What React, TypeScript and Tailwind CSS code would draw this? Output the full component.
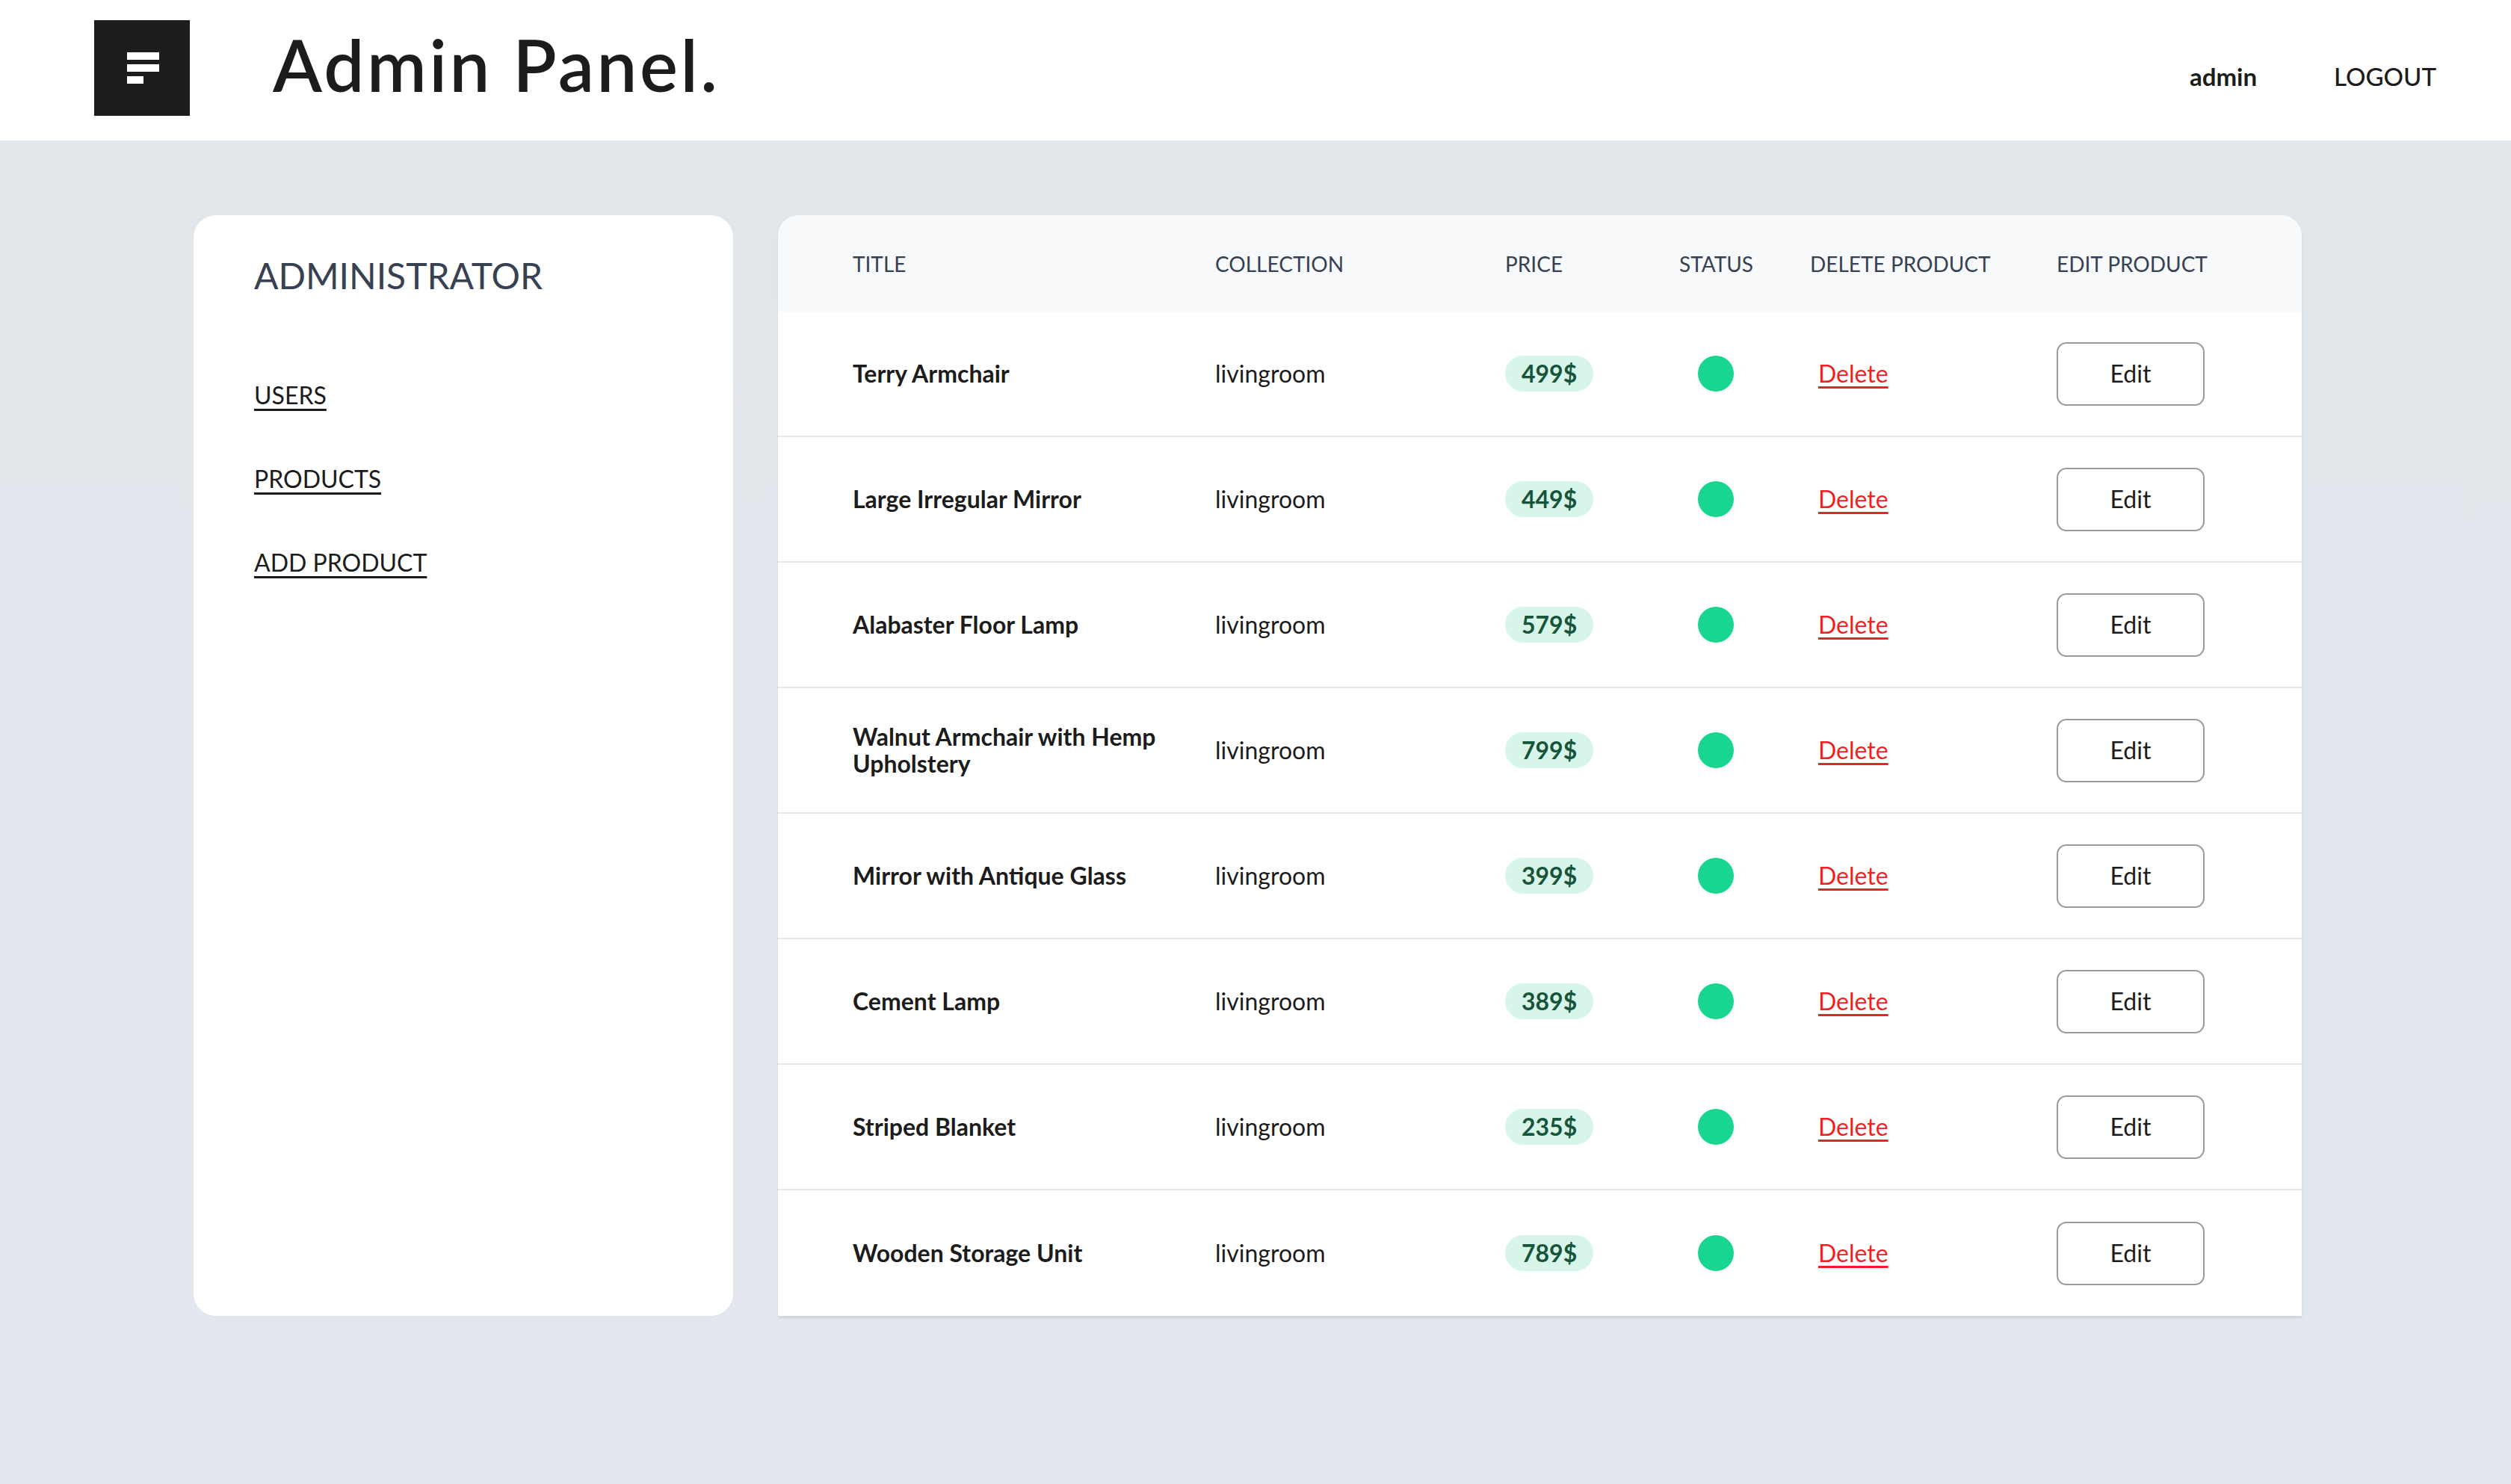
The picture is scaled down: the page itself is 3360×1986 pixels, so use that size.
import React from "react";

type Product = {
  id: number;
  title: string;
  collection: string;
  price: number;
};

const PRODUCTS: Product[] = [
  { id: 1, title: "Terry Armchair", collection: "livingroom", price: 499 },
  { id: 2, title: "Large Irregular Mirror", collection: "livingroom", price: 449 },
  { id: 3, title: "Alabaster Floor Lamp", collection: "livingroom", price: 579 },
  { id: 4, title: "Walnut Armchair with Hemp Upholstery", collection: "livingroom", price: 799 },
  { id: 5, title: "Mirror with Antique Glass", collection: "livingroom", price: 399 },
  { id: 6, title: "Cement Lamp", collection: "livingroom", price: 389 },
  { id: 7, title: "Striped Blanket", collection: "livingroom", price: 235 },
  { id: 8, title: "Wooden Storage Unit", collection: "livingroom", price: 789 },
];

const COLS = "grid grid-cols-[485px_388px_233px_175px_330px_1fr] pl-[100px]";

function Logo() {
  return (
    <div className="w-[128px] h-[128px] bg-[#1c1c1c] mt-[27px] shrink-0">
      <svg width="128" height="128" viewBox="0 0 128 128">
        <rect x="44" y="43" width="43" height="10" fill="#fff" />
        <rect x="44" y="59" width="43" height="10" fill="#fff" />
        <rect x="44" y="75" width="22" height="10" fill="#fff" />
      </svg>
    </div>
  );
}

function Header() {
  return (
    <header className="h-[188px] bg-white flex items-start pl-[126px] pr-[100px]">
      <Logo />
      <h1 className="ml-[111px] mt-[38px] text-[96px] leading-[96px] font-semibold tracking-[3.5px] text-[#1c1c1c]">
        Admin Panel.
      </h1>
      <div className="ml-auto mt-[86px] flex items-start gap-[103px] text-[33px] leading-[33px] text-[#1c1c1c]">
        <span className="font-bold">admin</span>
        <a href="#" className="font-medium">LOGOUT</a>
      </div>
    </header>
  );
}

function Sidebar() {
  return (
    <aside className="w-[722px] shrink-0 bg-white rounded-[30px] pl-[81px] pt-[57px]">
      <h2 className="text-[48px] leading-[48px] text-[#374151]">ADMINISTRATOR</h2>
      <nav className="mt-[120px] flex flex-col gap-[80px] text-[32px] leading-[32px] text-[#1c1c1c]">
        <a href="#" className="underline underline-offset-[6px] decoration-[3px]">USERS</a>
        <a href="#" className="underline underline-offset-[6px] decoration-[3px]">PRODUCTS</a>
        <a href="#" className="underline underline-offset-[6px] decoration-[3px]">ADD PRODUCT</a>
      </nav>
    </aside>
  );
}

function ProductRow({ product, last }: { product: Product; last: boolean }) {
  return (
    <div
      className={`${COLS} items-center h-[168px] text-[32px] text-[#1c1c1c] ${
        last ? "" : "border-b-2 border-[#e5e7eb]"
      }`}
    >
      <div className="font-bold leading-[36px] pr-[30px]">{product.title}</div>
      <div className="leading-[36px]">{product.collection}</div>
      <div>
        <span className="inline-flex items-center h-[48px] px-[22px] rounded-full bg-[#d8f5ea] text-[#17553a] font-bold leading-none">
          {product.price}$
        </span>
      </div>
      <div className="pl-[25px]">
        <div className="w-[48px] h-[48px] rounded-full bg-[#18d690]" />
      </div>
      <div className="pl-[11px]">
        <a href="#" className="text-[#ef1f24] underline underline-offset-[5px] decoration-[3px]">
          Delete
        </a>
      </div>
      <div>
        <button className="w-[198px] h-[85px] border-2 border-[#9a9a9a] rounded-[13px] bg-white text-[32px] text-[#1c1c1c]">
          Edit
        </button>
      </div>
    </div>
  );
}

function ProductTable() {
  return (
    <section className="w-[2039px] shrink-0 bg-white rounded-t-[28px] shadow-[0_3px_3px_rgba(0,0,0,0.08)] overflow-hidden">
      <div className={`${COLS} items-center h-[129px] bg-[#f7f9fb] text-[28px] text-[#374151]`}>
        <div>TITLE</div>
        <div>COLLECTION</div>
        <div>PRICE</div>
        <div>STATUS</div>
        <div>DELETE PRODUCT</div>
        <div>EDIT PRODUCT</div>
      </div>
      {PRODUCTS.map((p, i) => (
        <ProductRow key={p.id} product={p} last={i === PRODUCTS.length - 1} />
      ))}
    </section>
  );
}

export default function App() {
  return (
    <div
      className="min-h-screen bg-linear-to-b from-[#e1e6ea] to-[#e2e7ef]"
      style={{ fontFamily: "Lato, 'Noto Sans', sans-serif" }}
    >
      <Header />
      <main className="flex items-stretch gap-[60px] pl-[259px] pt-[100px] pb-[100px]">
        <Sidebar />
        <ProductTable />
      </main>
    </div>
  );
}
